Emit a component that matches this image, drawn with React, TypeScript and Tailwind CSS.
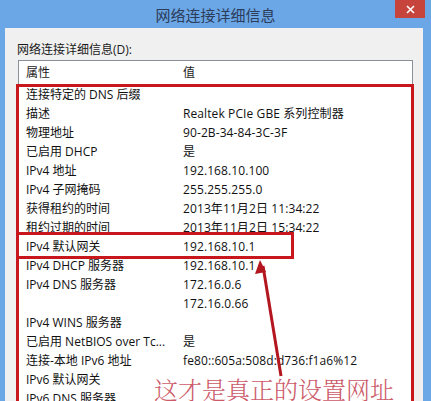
import React from "react";

const rows: [string, string][] = [
  ["连接特定的 DNS 后缀", ""],
  ["描述", "Realtek PCIe GBE 系列控制器"],
  ["物理地址", "90-2B-34-84-3C-3F"],
  ["已启用 DHCP", "是"],
  ["IPv4 地址", "192.168.10.100"],
  ["IPv4 子网掩码", "255.255.255.0"],
  ["获得租约的时间", "2013年11月2日 11:34:22"],
  ["租约过期的时间", "2013年11月2日 15:34:22"],
  ["IPv4 默认网关", "192.168.10.1"],
  ["IPv4 DHCP 服务器", "192.168.10.1"],
  ["IPv4 DNS 服务器", "172.16.0.6"],
  ["", "172.16.0.66"],
  ["IPv4 WINS 服务器", ""],
  ["已启用 NetBIOS over Tc...", "是"],
  ["连接-本地 IPv6 地址", "fe80::605a:508d:d736:f1a6%12"],
  ["IPv6 默认网关", ""],
  ["IPv6 DNS 服务器", ""],
];

const font = { fontFamily: '"Open Sans", "Noto Sans CJK SC", sans-serif' };

export default function App() {
  return (
    <div className="relative w-[431px] h-[401px] overflow-hidden bg-[#6ba6e6]" style={font}>
      {/* title bar */}
      <div className="relative h-[28px] flex items-center justify-center">
        <span className="text-[15px] text-[#2c3d5a] leading-none" style={{ fontFamily: '"Noto Sans CJK SC", sans-serif' }}>
          网络连接详细信息
        </span>
        <div className="absolute right-[6px] top-0 w-[30px] h-[18px] bg-[#c7443c] flex items-center justify-center">
          <svg width="9" height="9" viewBox="0 0 9 9">
            <path d="M1 1 L8 8 M8 1 L1 8" stroke="#ffffff" strokeWidth="1.6" />
          </svg>
        </div>
      </div>
      {/* body */}
      <div className="mx-[5px] mr-[8px] h-[373px] bg-[#f0f0f0] pl-[12px] pr-[10px] pt-[12px]">
        <div className="text-[12px] leading-[20px] text-[#1a1a1a] h-[20px]">网络连接详细信息(D):</div>
        <div className="bg-white border border-[#8a8f98] h-[400px] ml-[1px]">
          <div className="flex h-[24px] items-center text-[12px] text-[#1a1a1a]">
            <div className="w-[164px] pl-[7px]">属性</div>
            <div>值</div>
          </div>
          {rows.map(([k, v], i) => (
            <div key={i} className="flex h-[19px] items-center text-[12px] text-[#111] whitespace-nowrap">
              <div className="w-[164px] pl-[7px] overflow-hidden">{k}</div>
              <div className="tracking-[0.1px]">{v}</div>
            </div>
          ))}
        </div>
      </div>

      {/* annotations */}
      <div className="absolute left-[16px] top-[84px] w-[398px] h-[340px] border-[3px] border-[#c8161d]" />
      <div className="absolute left-[16px] top-[232px] w-[278px] h-[27px] border-[3px] border-[#c8161d]" />
      <svg className="absolute left-0 top-0" width="431" height="401">
        <line x1="263" y1="266" x2="281" y2="376" stroke="#b3161e" strokeWidth="3" />
        <path d="M260 260 L255 274 L266 272 Z" fill="#b3161e" />
      </svg>
      <div
        className="absolute left-[154px] top-[373px] text-[24px] leading-[32px] text-[#cc5a68] whitespace-nowrap font-light"
        style={{ fontFamily: '"Noto Serif CJK SC", "Noto Sans CJK SC", serif' }}
      >
        这才是真正的设置网址
      </div>
    </div>
  );
}
